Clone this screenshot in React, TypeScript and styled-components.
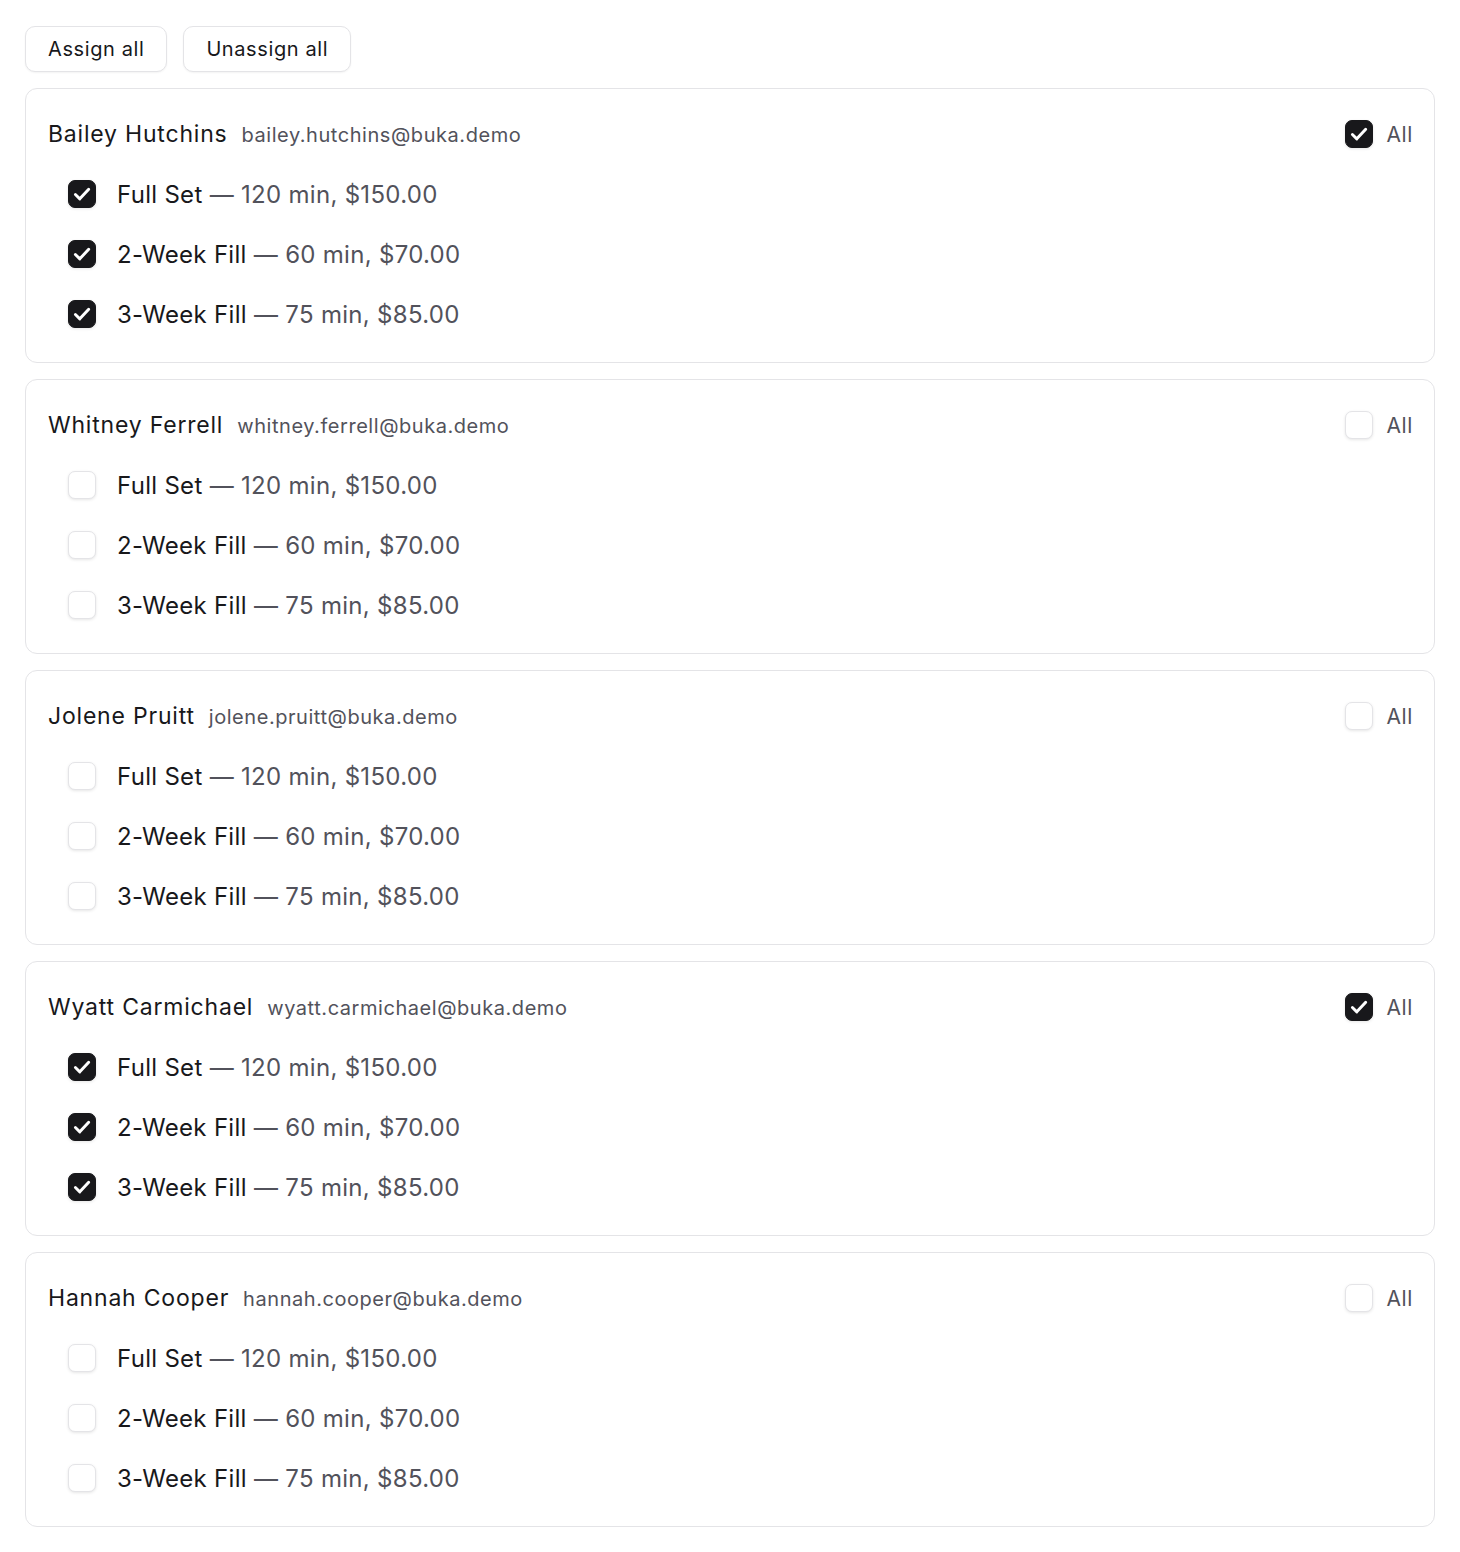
import React, { useState } from 'react';
import styled, { createGlobalStyle } from 'styled-components';

const GlobalStyle = createGlobalStyle`
  body {
    margin: 0;
    background: #ffffff;
    font-family: Inter, "Noto Sans", "Liberation Sans", sans-serif;
    color: #18181b;
  }
`;

type Service = { name: string; details: string };

const services: Service[] = [
  { name: 'Full Set', details: '120 min, $150.00' },
  { name: '2-Week Fill', details: '60 min, $70.00' },
  { name: '3-Week Fill', details: '75 min, $85.00' },
];

const staff = [
  { name: 'Bailey Hutchins', email: 'bailey.hutchins@buka.demo', on: true },
  { name: 'Whitney Ferrell', email: 'whitney.ferrell@buka.demo', on: false },
  { name: 'Jolene Pruitt', email: 'jolene.pruitt@buka.demo', on: false },
  { name: 'Wyatt Carmichael', email: 'wyatt.carmichael@buka.demo', on: true },
  { name: 'Hannah Cooper', email: 'hannah.cooper@buka.demo', on: false },
];

const Check = ({ checked, onClick }: { checked: boolean; onClick?: () => void }) => (
  <Box $checked={checked} onClick={onClick} role="checkbox" aria-checked={checked}>
    {checked && (
      <svg width="22" height="22" viewBox="0 0 24 24" fill="none" stroke="#fff" strokeWidth="3.2" strokeLinecap="round" strokeLinejoin="round">
        <path d="M4.8 12.6l4.8 4.7L19.3 6.8" />
      </svg>
    )}
  </Box>
);

const App = () => {
  const [state, setState] = useState<boolean[][]>(staff.map((s) => services.map(() => s.on)));

  const setAll = (v: boolean) => setState(state.map((row) => row.map(() => v)));
  const toggleRow = (i: number) => {
    const all = state[i].every(Boolean);
    setState(state.map((row, r) => (r === i ? row.map(() => !all) : row)));
  };
  const toggle = (i: number, j: number) =>
    setState(state.map((row, r) => (r === i ? row.map((c, k) => (k === j ? !c : c)) : row)));

  return (
    <Page>
      <GlobalStyle />
      <Toolbar>
        <Button onClick={() => setAll(true)}>Assign all</Button>
        <Button onClick={() => setAll(false)}>Unassign all</Button>
      </Toolbar>

      {staff.map((person, i) => (
        <Card key={person.email}>
          <Header>
            <Who>
              <Name>{person.name}</Name>
              <Email>{person.email}</Email>
            </Who>
            <AllToggle>
              <Check checked={state[i].every(Boolean)} onClick={() => toggleRow(i)} />
              <AllLabel>All</AllLabel>
            </AllToggle>
          </Header>
          <List>
            {services.map((svc, j) => (
              <Item key={svc.name}>
                <Check checked={state[i][j]} onClick={() => toggle(i, j)} />
                <ItemText>
                  {svc.name} <Muted>— {svc.details}</Muted>
                </ItemText>
              </Item>
            ))}
          </List>
        </Card>
      ))}
    </Page>
  );
};

const Page = styled.div`
  padding: 26px 25px;
  display: flex;
  flex-direction: column;
  gap: 16px;
`;

const Toolbar = styled.div`
  display: flex;
  gap: 16px;
`;

const Button = styled.button`
  height: 46px;
  padding: 0 22px;
  border: 1px solid #e4e4e7;
  border-radius: 10px;
  background: #fff;
  font-family: inherit;
  font-size: 20px;
  letter-spacing: 0.6px;
  color: #18181b;
  box-shadow: 0 1px 2px rgba(0, 0, 0, 0.05);
  cursor: pointer;
`;

const Card = styled.section`
  border: 1px solid #e4e4e7;
  border-radius: 12px;
  padding: 21px 22px 18px;
`;

const Header = styled.div`
  height: 48px;
  display: flex;
  align-items: center;
  justify-content: space-between;
`;

const Who = styled.div`
  display: flex;
  align-items: baseline;
  gap: 14px;
`;

const Name = styled.span`
  font-size: 23px;
  letter-spacing: 0.8px;
  color: #18181b;
`;

const Email = styled.span`
  font-size: 20px;
  letter-spacing: 0.55px;
  color: #52525b;
`;

const AllToggle = styled.label`
  display: flex;
  align-items: center;
  gap: 14px;
`;

const AllLabel = styled.span`
  font-size: 21px;
  letter-spacing: 0.6px;
  margin-right: -1px;
  color: #52525b;
`;

const List = styled.div`
  margin-top: 6px;
  padding-left: 20px;
  display: flex;
  flex-direction: column;
`;

const Item = styled.div`
  height: 60px;
  display: flex;
  align-items: center;
  gap: 21px;
`;

const ItemText = styled.span`
  font-size: 24px;
  letter-spacing: 0.3px;
  color: #18181b;
`;

const Muted = styled.span`
  color: #52525b;
`;

const Box = styled.span<{ $checked: boolean }>`
  width: 28px;
  height: 28px;
  box-sizing: border-box;
  border-radius: 7px;
  display: inline-flex;
  align-items: center;
  justify-content: center;
  flex-shrink: 0;
  cursor: pointer;
  background: ${(p) => (p.$checked ? '#18181b' : '#ffffff')};
  border: 1px solid ${(p) => (p.$checked ? '#18181b' : '#e4e4e7')};
  box-shadow: 0 1px 3px rgba(0, 0, 0, 0.1);
`;

export default App;
